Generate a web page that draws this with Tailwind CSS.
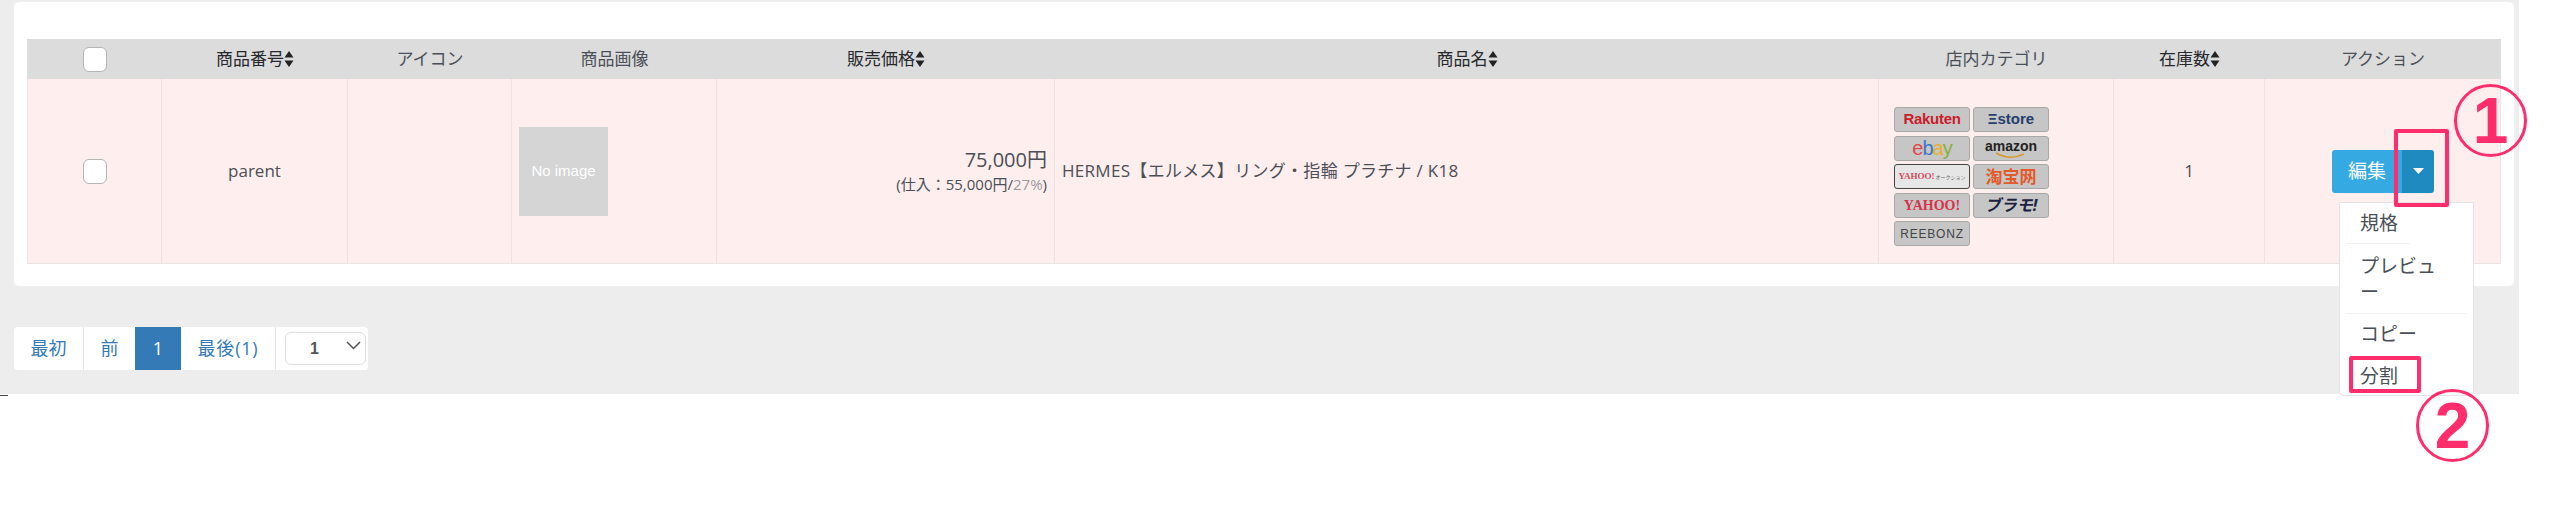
<!DOCTYPE html>
<html lang="ja">
<head>
  <meta charset="UTF-8">
  <title>商品一覧</title>
  <script src="https://cdn.jsdelivr.net/npm/@tailwindcss/browser@4"></script>
</head>
<body class="bg-white overflow-hidden font-['Open_Sans','Noto_Sans_CJK_JP',sans-serif] text-[#4b4f58]">
  <div class="relative w-[2560px] h-[517px]">
    <main class="w-[2519px] h-[394px] bg-[#ededed] pt-px pl-[13px]">
      <!-- 商品テーブル -->
      <section class="w-[2502px] h-[286px] bg-white rounded-[6px] border border-[#f0f0f0] pt-[37px] pl-[13px]">
        <div class="w-[2474px] grid grid-cols-[135px_186px_164px_205px_338px_824px_235px_151px_236px]">
          <!-- ヘッダー -->
          <div class="h-[40px] bg-[#dcdcdc] flex items-center justify-center"><span class="block w-[24px] h-[25px] bg-white rounded-[6px] border border-[#b5b5b5]"></span></div>
          <div class="h-[40px] bg-[#dcdcdc] flex items-center justify-center text-[17px] text-[#26282d]">商品番号<svg class="w-[10px] h-[16px]" viewBox="0 0 10 16"><path d="M5 0l4.500 6.500h-9zM5 16l-4.500-6.500h9z" fill="#222"/></svg></div>
          <div class="h-[40px] bg-[#dcdcdc] flex items-center justify-center text-[17px]">アイコン</div>
          <div class="h-[40px] bg-[#dcdcdc] flex items-center justify-center text-[17px]">商品画像</div>
          <div class="h-[40px] bg-[#dcdcdc] flex items-center justify-center text-[17px] text-[#26282d]">販売価格<svg class="w-[10px] h-[16px]" viewBox="0 0 10 16"><path d="M5 0l4.500 6.500h-9zM5 16l-4.500-6.500h9z" fill="#222"/></svg></div>
          <div class="h-[40px] bg-[#dcdcdc] flex items-center justify-center text-[17px] text-[#26282d]">商品名<svg class="w-[10px] h-[16px]" viewBox="0 0 10 16"><path d="M5 0l4.500 6.500h-9zM5 16l-4.500-6.500h9z" fill="#222"/></svg></div>
          <div class="h-[40px] bg-[#dcdcdc] flex items-center justify-center text-[17px]">店内カテゴリ</div>
          <div class="h-[40px] bg-[#dcdcdc] flex items-center justify-center text-[17px] text-[#26282d]">在庫数<svg class="w-[10px] h-[16px]" viewBox="0 0 10 16"><path d="M5 0l4.500 6.500h-9zM5 16l-4.500-6.500h9z" fill="#222"/></svg></div>
          <div class="h-[40px] bg-[#dcdcdc] flex items-center justify-center text-[17px]">アクション</div>

          <!-- 行 -->
          <div class="h-[185px] bg-[#feeeee] border-l border-b border-r border-[#ebe3e3] flex items-center justify-center"><span class="block w-[24px] h-[25px] bg-white rounded-[6px] border border-[#b5b5b5]"></span></div>
          <div class="h-[185px] bg-[#feeeee] border-b border-r border-[#ebe3e3] flex items-center justify-center text-[17px]">parent</div>
          <div class="h-[185px] bg-[#feeeee] border-b border-r border-[#ebe3e3]"></div>
          <div class="h-[185px] bg-[#feeeee] border-b border-r border-[#ebe3e3] flex items-center pl-[7px]">
            <div class="w-[89px] h-[89px] bg-[#d5d5d5] flex items-center justify-center text-[15px] text-white font-['Liberation_Sans',sans-serif]">No image</div>
          </div>
          <div class="h-[185px] bg-[#feeeee] border-b border-r border-[#ebe3e3] flex flex-col justify-center items-end pr-[7px] pb-[2px]">
            <div class="text-[20px] leading-[28px]">75,000円</div>
            <div class="text-[15px] leading-[20px]">(仕入：55,000円/<span class="text-[#9a9a9a]">27%</span>)</div>
          </div>
          <div class="h-[185px] bg-[#feeeee] border-b border-r border-[#ebe3e3] flex items-center pl-[7px] text-[17px] tracking-[0.3px]">HERMES【エルメス】リング・指輪 プラチナ / K18</div>
          <div class="h-[185px] bg-[#feeeee] border-b border-r border-[#ebe3e3] pl-[15px] pt-[28px]">
            <div class="grid grid-cols-[76px_76px] gap-x-[3px] gap-y-[3.500px]">
              <div class="h-[25px] rounded-[3px] border border-[#a8a8a8] bg-[#c6c6c6] flex items-center justify-center text-[15px] font-bold tracking-[-0.3px] text-[#c8202a] font-['Liberation_Sans',sans-serif]">Rakuten</div>
              <div class="h-[25px] rounded-[3px] border border-[#a8a8a8] bg-[#c6c6c6] flex items-center justify-center text-[15px] font-bold text-[#25406e] font-['Liberation_Sans',sans-serif]">Ξstore</div>
              <div class="h-[25px] rounded-[3px] border border-[#a8a8a8] bg-[#c6c6c6] flex items-center justify-center text-[20px] tracking-[-1px] font-['Liberation_Sans',sans-serif]"><span class="text-[#e0484f]">e</span><span class="text-[#3a78c8]">b</span><span class="text-[#e9b02c]">a</span><span class="text-[#85b13a]">y</span></div>
              <div class="relative h-[25px] rounded-[3px] border border-[#a8a8a8] bg-[#c6c6c6] flex items-center justify-center pb-[3px] text-[14px] font-bold text-[#222] font-['Liberation_Sans',sans-serif]">amazon<svg class="absolute left-[21px] top-[15px] w-[32px] h-[8px]" viewBox="0 0 32 8"><path d="M1 1q14 8 28 1" fill="none" stroke="#d99a2b" stroke-width="1.500"/></svg></div>
              <div class="h-[25px] rounded-[3px] border border-[#444] bg-[#e6e6e6] flex items-center justify-center gap-[1px] whitespace-nowrap text-[9px] font-bold text-[#d8485e] font-['Liberation_Serif',serif]">YAHOO!<span class="text-[5px] font-normal text-[#666] font-['Noto_Sans_CJK_JP',sans-serif]">オークション</span></div>
              <div class="h-[25px] rounded-[3px] border border-[#a8a8a8] bg-[#c6c6c6] flex items-center justify-center text-[17px] font-bold text-[#e2592a]">淘宝网</div>
              <div class="h-[25px] rounded-[3px] border border-[#a8a8a8] bg-[#c6c6c6] flex items-center justify-center text-[14px] font-bold text-[#d8324a] font-['Liberation_Serif',serif]">YAHOO!</div>
              <div class="h-[25px] rounded-[3px] border border-[#a8a8a8] bg-[#c6c6c6] flex items-center justify-center text-[16px] font-bold italic text-[#1c2240]">ブラモ!</div>
              <div class="h-[25px] rounded-[3px] border border-[#a8a8a8] bg-[#c6c6c6] flex items-center justify-center text-[12px] tracking-[0.8px] text-[#444] font-['Liberation_Sans',sans-serif]">REEBONZ</div>
            </div>
          </div>
          <div class="h-[185px] bg-[#feeeee] border-b border-r border-[#ebe3e3] flex items-center justify-center text-[17px]">1</div>
          <div class="h-[185px] bg-[#feeeee] border-b border-r border-[#ebe3e3] flex items-center pl-[67px]">
            <div class="flex h-[43px] rounded-[3px] overflow-hidden">
              <div class="w-[70px] bg-[#35a9e1] text-white text-[19px] flex items-center justify-center">編集</div>
              <div class="w-[32px] bg-[#1f8abf] flex items-center justify-center"><svg class="w-[11px] h-[6px]" viewBox="0 0 11 6"><path d="M0 0h11l-5.500 6z" fill="#fff"/></svg></div>
            </div>
          </div>
        </div>
      </section>

      <!-- ページネーション -->
      <nav class="mt-[40px] ml-px w-[354px] h-[43px] flex bg-white rounded-[4px] text-[18px] text-[#337ab7]">
        <a class="w-[70px] flex items-center justify-center border-r border-[#e6e6e6]">最初</a>
        <a class="w-[51px] flex items-center justify-center">前</a>
        <a class="w-[46px] flex items-center justify-center bg-[#337ab7] text-white">1</a>
        <a class="w-[95px] flex items-center justify-center border-r border-[#e6e6e6] tracking-[0.8px]">最後(1)</a>
        <div class="ml-[9px] my-[5px] w-[81px] flex items-center justify-between pl-[24px] pr-[4px] border border-[#dedede] rounded-[6px] text-[16px] font-bold text-[#555] font-['Liberation_Sans',sans-serif]">1<svg class="w-[15px] h-[9px] mb-[6px]" viewBox="0 0 15 9"><path d="M1 1l6.500 6.500L14 1" fill="none" stroke="#555" stroke-width="1.500"/></svg></div>
      </nav>
    </main>

    <!-- ページ左下の切れ端 -->
    <div class="absolute left-0 top-[395px] w-[8px] h-px bg-[#444]"></div>

    <!-- ドロップダウンメニュー -->
    <ul class="absolute left-[2339px] top-[202px] w-[135px] h-[194px] bg-white border border-[#e2e2e8] rounded-b-[5px] text-[19px] leading-[26px]">
      <li class="h-[41px] ml-[6px] w-[64px] pl-[14px] pt-[7px] border-b border-[#f3f3f3]">規格</li>
      <li class="h-[70px] mx-[6px] pl-[14px] pt-[9px] border-b border-[#f3f3f3]">プレビュ<br>ー</li>
      <li class="h-[41px] mx-[6px] pl-[14px] pt-[7px]">コピー</li>
      <li class="ml-[6px] pl-[14px] pt-[8px]">分割</li>
    </ul>

    <!-- 注釈 -->
    <div class="absolute left-[2394px] top-[129px] w-[55px] h-[78px] border-[4px] border-[#ff2d6b] rounded-[2px]"></div>
    <div class="absolute left-[2349px] top-[356px] w-[72px] h-[37px] border-[4px] border-[#ff2d6b] rounded-[2px]"></div>
    <div class="absolute left-[2454px] top-[84px] w-[73px] h-[73px] rounded-full border-[3px] border-[#ff2d6b] flex items-center justify-center text-[64px] font-bold text-[#ff2d6b] font-['Liberation_Sans',sans-serif]">1</div>
    <div class="absolute left-[2416px] top-[389px] w-[73px] h-[73px] rounded-full border-[3px] border-[#ff2d6b] flex items-center justify-center text-[64px] font-bold text-[#ff2d6b] font-['Liberation_Sans',sans-serif]">2</div>
  </div>
</body>
</html>
